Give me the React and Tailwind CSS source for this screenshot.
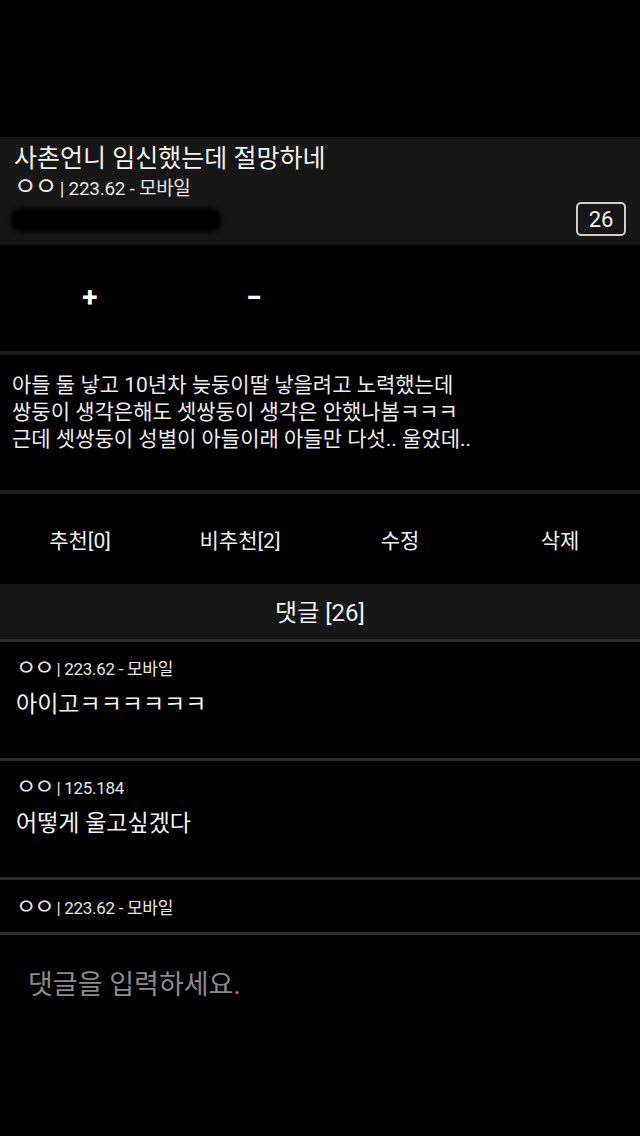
function Meta({ ip, className }) {
  return (
    <div className={className}>
      <span className="text-[1.3em] leading-[0] tracking-[-2px]">ㅇㅇ</span>
      <span className="tracking-[-0.3px]"> | {ip}</span>
    </div>
  );
}

export default function App() {
  const comments = [
    { ip: "223.62 - 모바일", text: "아이고ㅋㅋㅋㅋㅋㅋ" },
    { ip: "125.184", text: "어떻게 울고싶겠다" },
  ];

  return (
    <div
      className="w-[640px] h-[1136px] bg-black text-white overflow-hidden"
      style={{ fontFamily: 'Roboto, "Noto Sans CJK KR", sans-serif' }}
    >
      <div className="h-[137px]" />

      {/* post header */}
      <div className="h-[108px] bg-[#161616] px-[14px] pt-[6px] flex justify-between">
        <div>
          <div className="text-[25px] leading-[32px] text-[#f2f2f2]">사촌언니 임신했는데 절망하네</div>
          <Meta ip="223.62 - 모바일" className="text-[19px] leading-[26px] text-[#e8e8e8] mt-[1px]" />
          <div className="mt-[6px] ml-[-4px] w-[212px] h-[24px] rounded-full bg-black blur-[2px]" />
        </div>
        <div className="self-start mt-[59px] w-[50px] h-[34px] border-2 border-[#cfcfcf] rounded-[5px] flex items-center justify-center text-[22px] text-[#f2f2f2]">
          26
        </div>
      </div>

      {/* vote */}
      <div className="h-[106px] flex items-center">
        <div className="w-[180px] flex justify-center text-[28px] font-bold">+</div>
        <div className="w-[148px] flex justify-center text-[28px] font-bold">−</div>
      </div>
      <div className="h-[4px] bg-[#1e1e1e]" />

      {/* body */}
      <div className="h-[135px] px-[12px] pt-[17px] text-[21px] leading-[27px] text-[#ececec]">
        <div>아들 둘 낳고 10년차 늦둥이딸 낳을려고 노력했는데</div>
        <div>쌍둥이 생각은해도 셋쌍둥이 생각은 안했나봄ㅋㅋㅋ</div>
        <div>근데 셋쌍둥이 성별이 아들이래 아들만 다섯.. 울었데..</div>
      </div>
      <div className="h-[4px] bg-[#1e1e1e]" />

      {/* actions */}
      <div className="h-[90px] pt-[6px] grid grid-cols-4 items-center text-[21px] text-[#eeeeee]">
        <div className="text-center">추천[0]</div>
        <div className="text-center">비추천[2]</div>
        <div className="text-center">수정</div>
        <div className="text-center">삭제</div>
      </div>

      {/* comment header */}
      <div className="h-[55px] pt-[2px] bg-[#161616] flex items-center justify-center text-[24px] text-[#f0f0f0]">
        댓글 [26]
      </div>
      <div className="h-[3px] bg-[#2c2c2c]" />

      {comments.map((c, i) => (
        <div key={i}>
          <div className="h-[116px] px-[16px] pt-[16px]">
            <Meta ip={c.ip} className="text-[17px] leading-[22px] text-[#e6e6e6]" />
            <div className="text-[23px] leading-[30px] mt-[10px] text-[#f2f2f2]">{c.text}</div>
          </div>
          <div className="h-[3px] bg-[#2c2c2c]" />
        </div>
      ))}

      <div className="h-[52px] px-[16px] pt-[17px]">
        <Meta ip="223.62 - 모바일" className="text-[17px] leading-[22px] text-[#e6e6e6]" />
      </div>
      <div className="h-[3px] bg-[#2c2c2c]" />

      {/* input */}
      <div className="px-[28px] pt-[30px]">
        <div className="text-[27px] text-[#8a8a8a]">댓글을 입력하세요.</div>
      </div>
    </div>
  );
}
